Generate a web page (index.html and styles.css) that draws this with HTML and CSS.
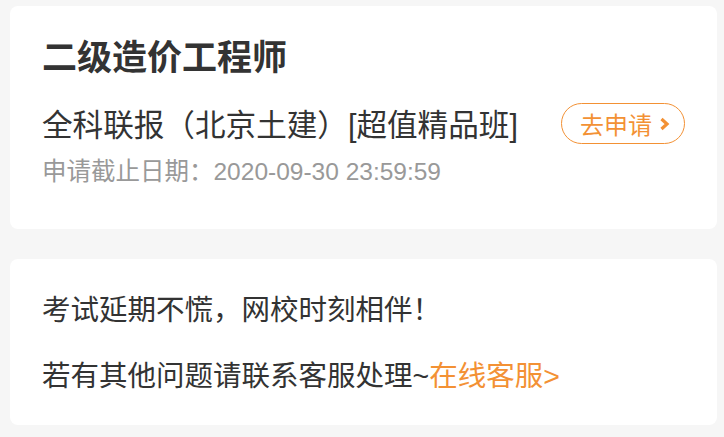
FILE: index.html
```html
<!DOCTYPE html>
<html lang="zh-CN">
<head>
  <meta charset="UTF-8">
  <meta name="viewport" content="width=device-width, initial-scale=1.0">
  <title>二级造价工程师</title>
  <link rel="stylesheet" href="styles.css">
</head>
<body>
  <!-- 报名信息 -->
  <div class="card apply-card">
    <h1 class="title">二级造价工程师</h1>
    <div class="course-row">
      <span class="course-name">全科联报（北京土建）[超值精品班]</span>
      <a class="apply-btn" href="#">去申请
        <svg class="chevron" width="11" height="14" viewBox="0 0 11 14">
          <path d="M2.5 2 L8 7 L2.5 12" fill="none" stroke="#f39134" stroke-width="3.2"/>
        </svg>
      </a>
    </div>
    <div class="deadline">申请截止日期：2020-09-30 23:59:59</div>
  </div>

  <!-- 提示 -->
  <div class="card tip-card">
    <p class="tip">考试延期不慌，网校时刻相伴！</p>
    <p class="tip">若有其他问题请联系客服处理~<a class="service-link" href="#">在线客服&gt;</a></p>
  </div>
</body>
</html>
```

FILE: styles.css
```css
body {
  font-family: "Liberation Sans", "Noto Sans CJK SC", sans-serif;
  background: #f6f6f6;
  color: #333;
  margin: 0;
  padding: 6px 7px 0 10px;
}

.card {
  background: #fff;
  border-radius: 8px;
}

/* 报名信息 */
.apply-card {
  padding: 32px 32px 42px 32px;
  height: 149px;
}

.title {
  margin: 0;
  font-size: 35px;
  line-height: 40px;
  font-weight: bold;
  color: #333;
}

.course-row {
  display: flex;
  justify-content: space-between;
  align-items: center;
  margin-top: 27px;
  height: 40px;
}

.course-name {
  font-size: 30.6px;
  line-height: 40px;
}

.apply-btn {
  display: flex;
  align-items: center;
  justify-content: center;
  gap: 7px;
  box-sizing: border-box;
  width: 124px;
  height: 41px;
  margin-top: -3px;
  padding-left: 4px;
  border: 1px solid #f39134;
  border-radius: 21px;
  color: #f39134;
  font-size: 24px;
  text-decoration: none;
}

.deadline {
  margin-top: 12px;
  font-size: 24.5px;
  line-height: 30px;
  color: #999;
}

/* 提示 */
.tip-card {
  margin-top: 30px;
  padding: 31px 32px 29px 32px;
}

.tip {
  margin: 0;
  font-size: 28.5px;
  line-height: 40px;
}

.tip + .tip {
  margin-top: 26px;
}

.service-link {
  color: #f39134;
  text-decoration: none;
}
```
